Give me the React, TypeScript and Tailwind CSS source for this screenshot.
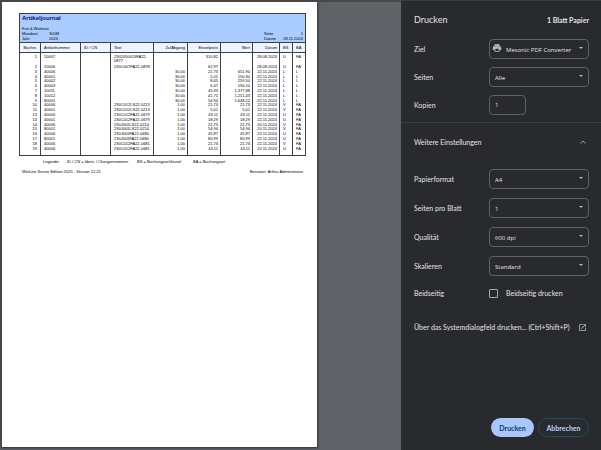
import { useState } from "react";
import type { ReactNode } from "react";

type Entry = [string, string, string, string, string, string, string, string, string];

const entries: Entry[] = [
  ["1", "20007", "2302050013FA22- 0877", "", "310,82", "", "28.08.2024", "U", "FA"],
  ["2", "20006", "230C007FA22-0878", "", "62,97", "", "28.08.2024", "U", "FA"],
  ["3", "40006", "", "30,00", "21,73", "651,90", "22.11.2024", "L", "L"],
  ["4", "40001", "", "30,00", "5,01", "150,30", "22.11.2024", "L", "L"],
  ["5", "40002", "", "30,00", "8,65", "259,50", "22.11.2024", "L", "L"],
  ["6", "40003", "", "30,00", "6,47", "194,10", "22.11.2024", "L", "L"],
  ["7", "10011", "", "30,00", "45,93", "1.377,88", "22.11.2024", "L", "L"],
  ["8", "10012", "", "30,00", "41,71", "1.251,43", "22.11.2024", "L", "L"],
  ["9", "80001", "", "30,00", "54,94", "1.648,22", "22.11.2024", "L", "L"],
  ["10", "40006", "230C012LS22-0213", "1,00", "21,73", "21,73", "22.11.2024", "V", "FA"],
  ["11", "40001", "230C012LS22-0213", "1,00", "5,01", "5,01", "22.11.2024", "V", "FA"],
  ["12", "40006", "230C012FA22-0679", "1,00", "43,11", "43,11", "22.11.2024", "U", "FA"],
  ["13", "40001", "230C012FA22-0679", "1,00", "18,29", "18,29", "22.11.2024", "U", "FA"],
  ["14", "40006", "230J001LS22-0214", "1,00", "21,73", "21,73", "20.11.2024", "V", "FA"],
  ["15", "80001", "230J001LS22-0214", "1,00", "54,94", "54,94", "20.11.2024", "V", "FA"],
  ["16", "40006", "230J001FA22-0680", "1,00", "45,87", "45,87", "22.11.2024", "U", "FA"],
  ["17", "80001", "230J001FA22-0680", "1,00", "80,99", "80,99", "22.11.2024", "U", "FA"],
  ["18", "40006", "230C012FA22-0681", "1,00", "21,73", "21,73", "22.11.2024", "V", "FA"],
  ["19", "40006", "230C012FA22-0681", "1,00", "43,11", "43,11", "22.11.2024", "U", "FA"],
];

const left = "border-l border-[#3c3f48] pl-[3px] text-left align-top first:border-l-0";
const right = "border-l border-[#3c3f48] pr-[2px] text-right align-top first:border-l-0 first:pr-[3px]";

function Journal() {
  return (
    <section className="border border-[#3c3f48]">
      <header className="flex h-[28px] flex-col bg-[#aaccff] px-[2px]">
        <h1 className="text-[6px] font-bold leading-[8px] text-[#000a96]">Artikeljournal</h1>
        <p className="mt-[4px] leading-[5px]">Fun &amp; Workout</p>
        <div className="flex justify-between leading-[5px]">
          <dl className="grid grid-cols-[27px_auto]">
            <dt>Mandant</dt>
            <dd>300M</dd>
            <dt>Jahr</dt>
            <dd>2024</dd>
          </dl>
          <dl className="grid grid-cols-[17px_22px] [&_dd]:text-right">
            <dt>Seite</dt>
            <dd>1</dd>
            <dt>Datum</dt>
            <dd>28.11.2024</dd>
          </dl>
        </div>
      </header>
      <table className="h-[113px] w-full table-fixed border-separate border-spacing-0 leading-[4px]">
        <colgroup>
          <col className="w-[20px]" />
          <col className="w-[40px]" />
          <col className="w-[30px]" />
          <col className="w-[43px]" />
          <col className="w-[34px]" />
          <col className="w-[33px]" />
          <col className="w-[32px]" />
          <col className="w-[27px]" />
          <col className="w-[13px]" />
          <col className="w-[13px]" />
        </colgroup>
        <thead>
          <tr className="h-[11px] bg-[#eef4ff] [&>th]:border-y [&>th]:align-middle [&>th]:font-normal">
            <th className={right}>Buchnr.</th>
            <th className={left}>Artikelnummer</th>
            <th className={left}>ID / CN</th>
            <th className={left}>Text</th>
            <th className={right}>Zu/Abgang</th>
            <th className={right}>Einzelpreis</th>
            <th className={right}>Wert</th>
            <th className={right}>Datum</th>
            <th className={left}>BS</th>
            <th className={left}>BA</th>
          </tr>
        </thead>
        <tbody className="[&>tr:first-child>td]:pt-[2px] [&>tr:last-child>td]:pb-[3px]">
          {entries.map(([nr, article, text, amount, price, value, date, bs, ba]) => (
            <tr key={nr}>
              <td className={right}>{nr}</td>
              <td className={left}>{article}</td>
              <td className={left} />
              <td className={left}>
                {text.split(" ").map((line) => (
                  <span key={line} className="block whitespace-nowrap">
                    {line}
                  </span>
                ))}
              </td>
              <td className={right}>{amount}</td>
              <td className={right}>{price}</td>
              <td className={right}>{value}</td>
              <td className={right}>{date}</td>
              <td className={left}>{bs}</td>
              <td className={left}>{ba}</td>
            </tr>
          ))}
        </tbody>
      </table>
    </section>
  );
}

function PrinterIcon() {
  return (
    <svg viewBox="0 0 24 24" className="size-[10px]" fill="#b9bcc1" aria-hidden="true">
      <path d="M18 3H6v4h12V3zm1 5H5c-1.700 0-3 1.300-3 3v6h4v4h12v-4h4v-6c0-1.700-1.300-3-3-3zm-3 11H8v-5h8v5zm3-7c-.6 0-1-.4-1-1s.4-1 1-1 1 .4 1 1-.4 1-1 1z" />
    </svg>
  );
}

const fieldBox =
  "h-[20px] rounded-[4px] border border-[#5f6368] bg-transparent font-['Open_Sans','Segoe_UI',sans-serif] text-[6px] outline-none";

function Row({ id, label, children }: { id: string; label: string; children: ReactNode }) {
  return (
    <div className="flex items-center justify-between">
      <label htmlFor={id}>{label}</label>
      {children}
    </div>
  );
}

function SelectRow({ id, label, value, icon }: { id: string; label: string; value: string; icon?: ReactNode }) {
  return (
    <Row id={id} label={label}>
      <div className="relative w-[100px]">
        {icon && <span className="absolute left-[3px] top-[4px]">{icon}</span>}
        <select
          id={id}
          className={`${fieldBox} block w-full appearance-none pr-[12px] pt-[1px] ${icon ? "pl-[16px]" : "pl-[5px]"}`}
        >
          <option>{value}</option>
        </select>
        <svg viewBox="0 0 4 2" className="pointer-events-none absolute right-[6px] top-[8px] h-[2px] w-[4px]" fill="#b9bcc1" aria-hidden="true">
          <path d="M0 0h4L2 2z" />
        </svg>
      </div>
    </Row>
  );
}

export default function App() {
  const [copies, setCopies] = useState("1");
  return (
    <div className="flex min-h-screen bg-[#5f6367]">
      <main className="flex min-w-0 flex-1 items-stretch border-t-2 border-[#46484c]">
        <article className="mb-[3px] max-w-[317px] flex-1 border-l-2 border-[#46484c] bg-white pl-[17px] pr-[11px] pt-[11px] font-['Liberation_Sans',Arial,sans-serif] text-[4px] text-black shadow-[1px_1px_2px_#303236]">
          <Journal />
          <footer className="leading-[5px]">
            <p className="mt-[3px] grid grid-cols-[24px_70px_56px_auto] pl-[24px]">
              <span>Legende:</span>
              <span>ID / CN = Ident- / Chargennummer</span>
              <span>BS = Buchungsschlüssel</span>
              <span>BA = Buchungsart</span>
            </p>
            <p className="mt-[5px] flex justify-between px-[3px]">
              <span>WinLine Server Edition 2025 - Version 12.25</span>
              <span>Benutzer: Arthur Administrator</span>
            </p>
          </footer>
        </article>
      </main>

      <aside className="flex w-[200px] shrink-0 flex-col border-t border-[#3c3d41] bg-[#292a2d] font-[Lato,'Segoe_UI',sans-serif] text-[7px] leading-[10px] text-[#e3e4e7]">
        <header className="flex h-[38px] items-center justify-between pl-[13px] pr-[12px]">
          <h2 className="text-[9px]">Drucken</h2>
          <span className="font-bold">1 Blatt Papier</span>
        </header>
        <div className="flex flex-col gap-[8px] border-b border-[#3c3d41] pb-[7px] pl-[13px] pr-[12px]">
          <SelectRow id="target" label="Ziel" value="Mesonic PDF Converter" icon={<PrinterIcon />} />
          <SelectRow id="pages" label="Seiten" value="Alle" />
          <Row id="copies" label="Kopien">
            <div className="w-[100px]">
              <input
                id="copies"
                value={copies}
                onChange={(e) => setCopies(e.target.value)}
                className={`${fieldBox} block w-[37px] pl-[5px]`}
              />
            </div>
          </Row>
        </div>
        <button type="button" className="flex h-[38px] shrink-0 items-center justify-between pl-[13px] pr-[12px]">
          Weitere Einstellungen
          <svg viewBox="0 0 6 4" className="mr-[3px] h-[4px] w-[6px]" fill="none" stroke="#b9bcc1" strokeWidth=".8" aria-hidden="true">
            <path d="M.5 3.500 3 1l2.500 2.500" />
          </svg>
        </button>
        <div className="mt-[8px] flex flex-col gap-[9px] pl-[13px] pr-[12px]">
          <SelectRow id="format" label="Papierformat" value="A4" />
          <SelectRow id="sheet" label="Seiten pro Blatt" value="1" />
          <SelectRow id="quality" label="Qualität" value="600 dpi" />
          <SelectRow id="scale" label="Skalieren" value="Standard" />
          <div className="mt-[3px] flex items-center justify-between">
            <span>Beidseitig</span>
            <label className="flex w-[100px] items-center gap-[8px]">
              <input type="checkbox" className="size-[9px] appearance-none rounded-[1px] border border-[#a5a8ad] checked:bg-[#a8c7fa]" />
              Beidseitig drucken
            </label>
          </div>
        </div>
        <a href="#system" className="mt-[24px] flex items-center justify-between pl-[13px] pr-[12px]">
          Über das Systemdialogfeld drucken... (Ctrl+Shift+P)
          <svg viewBox="0 0 24 24" className="mr-[2px] size-[9px]" fill="#b9bcc1" aria-hidden="true">
            <path d="M19 19H5V5h7V3H5c-1.100 0-2 .9-2 2v14c0 1.100.9 2 2 2h14c1.100 0 2-.9 2-2v-7h-2v7zM14 3v2h3.600l-9.800 9.800 1.400 1.400L19 6.400V10h2V3h-7z" />
          </svg>
        </a>
        <footer className="mt-auto flex justify-end gap-[4px] pb-[13px] pr-[12px] font-bold">
          <button type="button" className="h-[19px] w-[43px] rounded-full bg-[#a8c7fa] text-[#0b3a78]">
            Drucken
          </button>
          <button type="button" className="h-[19px] w-[51px] rounded-full border border-[#1d5063] text-[#b7d3fb]">
            Abbrechen
          </button>
        </footer>
      </aside>
    </div>
  );
}
